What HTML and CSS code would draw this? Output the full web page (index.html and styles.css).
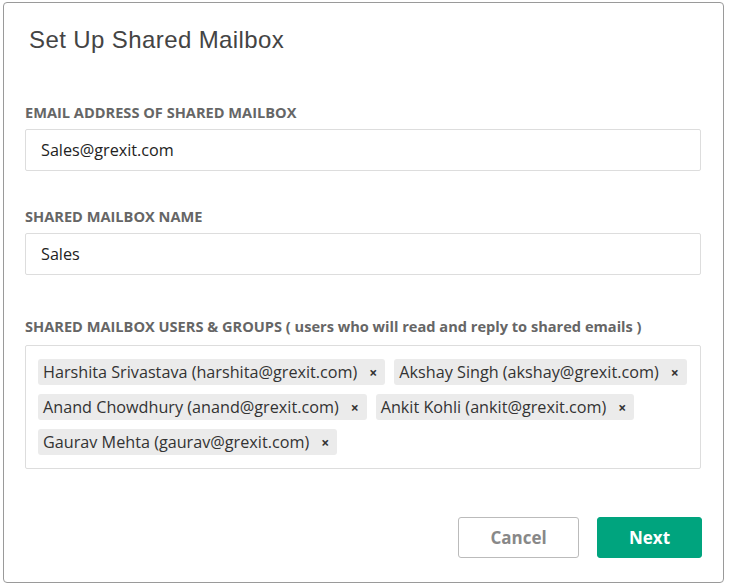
FILE: index.html
```html
<!DOCTYPE html>
<html>
<head>
<meta charset="utf-8">
<link rel="stylesheet" href="styles.css">
</head>
<body>
<div class="dialog">
  <h1 class="title">Set Up Shared Mailbox</h1>
  <div class="field field-first">
    <label class="label">EMAIL ADDRESS OF SHARED MAILBOX</label>
    <div class="input">Sales@grexit.com</div>
  </div>
  <div class="field field-second">
    <label class="label">SHARED MAILBOX NAME</label>
    <div class="input">Sales</div>
  </div>
  <div class="field field-third">
    <label class="label label-users">SHARED MAILBOX USERS &amp; GROUPS ( users who will read and reply to shared emails )</label>
    <div class="tagbox">
      <div class="tagrow">
        <span class="tag">Harshita Srivastava (harshita@grexit.com)<span class="x">×</span></span>
        <span class="tag">Akshay Singh (akshay@grexit.com)<span class="x">×</span></span>
      </div>
      <div class="tagrow">
        <span class="tag">Anand Chowdhury (anand@grexit.com)<span class="x">×</span></span>
        <span class="tag">Ankit Kohli (ankit@grexit.com)<span class="x">×</span></span>
      </div>
      <div class="tagrow">
        <span class="tag">Gaurav Mehta (gaurav@grexit.com)<span class="x">×</span></span>
      </div>
    </div>
  </div>
  <div class="actions">
    <button class="btn btn-cancel">Cancel</button>
    <button class="btn btn-next">Next</button>
  </div>
</div>
</body>
</html>
```

FILE: styles.css
```css
html, body {
  margin: 0;
  padding: 0;
  background: #ffffff;
}

body {
  padding: 2px 0 0 3px;
}

.dialog {
  box-sizing: border-box;
  width: 721px;
  height: 581px;
  border: 1px solid #9a9a9a;
  border-radius: 4px;
  padding: 23px 21px 0 21px;
  font-family: "Open Sans", sans-serif;
}

.title {
  margin: 0 0 0 4px;
  font-family: "Liberation Sans", Arial, sans-serif;
  font-weight: normal;
  font-size: 24px;
  letter-spacing: 0.4px;
  line-height: 28px;
  color: #444444;
}

.field {
  display: flex;
  flex-direction: column;
}

.field-first { margin-top: 48px; }
.field-second { margin-top: 35px; }
.field-third { margin-top: 41px; }

.label {
  display: block;
  font-size: 14.6px;
  font-weight: 700;
  line-height: 20px;
  color: #666666;
  margin-bottom: 7px;
}

.label-users { margin-bottom: 9px; }

.input {
  box-sizing: border-box;
  height: 42px;
  width: 676px;
  border: 1px solid #dddddd;
  border-radius: 2px;
  padding: 0 15px;
  display: flex;
  align-items: center;
  font-size: 16.2px;
  color: #222222;
}

.tagbox {
  box-sizing: border-box;
  width: 676px;
  height: 124px;
  border: 1px solid #dddddd;
  border-radius: 2px;
  padding: 13px 12px;
  display: flex;
  flex-direction: column;
  gap: 9px;
}

.tagrow {
  display: flex;
  gap: 9px;
}

.tag {
  display: inline-flex;
  align-items: center;
  height: 26px;
  padding: 0 8px 0 5px;
  background: #ebebeb;
  border-radius: 3px;
  font-size: 16.2px;
  color: #333333;
  white-space: nowrap;
}

.x {
  margin-left: 12px;
  font-size: 14px;
  font-weight: 700;
  color: #333333;
}

.actions {
  display: flex;
  justify-content: flex-end;
  gap: 18px;
  margin-top: 48px;
}

.btn {
  box-sizing: border-box;
  height: 41px;
  border-radius: 3px;
  font-family: "Open Sans", sans-serif;
  font-size: 17px;
  font-weight: 700;
  cursor: pointer;
}

.btn-cancel {
  width: 121px;
  background: #ffffff;
  border: 1px solid #bbbbbb;
  color: #888888;
}

.btn-next {
  width: 105px;
  background: #00a47e;
  border: 1px solid #00a47e;
  color: #ffffff;
}
```
